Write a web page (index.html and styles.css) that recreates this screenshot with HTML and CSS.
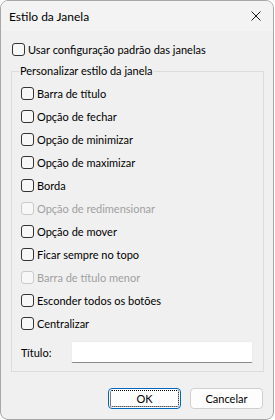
FILE: index.html
```html
<!DOCTYPE html>
<html lang="pt">
    <head>
        <meta charset="UTF-8" />
        <title>Estilo da Janela</title>
        <link rel="stylesheet" href="styles.css">
    </head>
    <body>
        <div class="window">
            <div class="titlebar">
                <span class="title">Estilo da Janela</span>
                <span class="close">
                    <svg width="10" height="10" viewBox="0 0 10 10">
                        <path d="M0.5 0.5 L9.5 9.5 M9.5 0.5 L0.5 9.5" stroke="#1a1a1a" stroke-width="1" fill="none" />
                    </svg>
                </span>
            </div>
            <div class="content">
                <label class="check top"><span class="box"></span>Usar configuração padrão das janelas</label>
                <fieldset class="group">
                    <legend>Personalizar estilo da janela</legend>
                    <label class="check"><span class="box"></span>Barra de título</label>
                    <label class="check"><span class="box"></span>Opção de fechar</label>
                    <label class="check"><span class="box"></span>Opção de minimizar</label>
                    <label class="check"><span class="box"></span>Opção de maximizar</label>
                    <label class="check"><span class="box"></span>Borda</label>
                    <label class="check disabled"><span class="box"></span>Opção de redimensionar</label>
                    <label class="check"><span class="box"></span>Opção de mover</label>
                    <label class="check"><span class="box"></span>Ficar sempre no topo</label>
                    <label class="check disabled"><span class="box"></span>Barra de título menor</label>
                    <label class="check"><span class="box"></span>Esconder todos os botões</label>
                    <label class="check"><span class="box"></span>Centralizar</label>
                    <div class="field">
                        <span class="field-label">Título:</span>
                        <input type="text" class="field-input" />
                    </div>
                </fieldset>
                <div class="buttons">
                    <button type="button" class="btn default"><span class="focus">OK</span></button>
                    <button type="button" class="btn">Cancelar</button>
                </div>
            </div>
        </div>
    </body>
</html>
```

FILE: styles.css
```css
* {
    margin: 0;
    padding: 0;
    box-sizing: border-box;
}
body {
    width: 275px;
    height: 420px;
    background-color: #ffffff;
    font-family: Lato, "Noto Sans", sans-serif;
    font-size: 11px;
    color: #000;
}
.window {
    width: 274px;
    height: 420px;
    border: 1px solid #a8a8a8;
    border-radius: 8px;
    background-color: #f0f0f0;
    overflow: hidden;
}
.titlebar {
    height: 30px;
    background-color: #f3f3f3;
    display: flex;
    align-items: center;
    justify-content: space-between;
    padding: 0 8px;
    font-size: 12px;
}
.titlebar .close {
    display: flex;
    margin-right: 4px;
}
.content {
    padding: 7px 9px 0 10px;
}
.check {
    display: flex;
    align-items: center;
    height: 23px;
    white-space: nowrap;
}
.check .box {
    width: 13px;
    height: 13px;
    border: 1px solid #333;
    border-radius: 3px;
    background-color: #f7f7f7;
    margin-right: 3px;
    flex: none;
}
.check.top {
    margin-left: 1px;
}
.check.disabled {
    color: #a0a0a0;
}
.check.disabled .box {
    border-color: #cacaca;
}
.group {
    margin-top: 2px;
    border: 1px solid #dcdcdc;
    padding: 3px 9px 8px 9px;
}
.group legend {
    line-height: 16px;
    margin-left: -2px;
    padding: 0 1px;
}
.field {
    display: flex;
    align-items: center;
    margin-top: 6px;
}
.field-label {
    width: 50px;
}
.field-input {
    width: 182px;
    height: 22px;
    background-color: #fff;
    border: 1px solid #ececec;
    border-bottom-color: #8a8a8a;
    border-radius: 2px;
    outline: none;
}
.buttons {
    display: flex;
    justify-content: flex-end;
    gap: 9px;
    margin-top: 16px;
    padding-right: 1px;
}
.btn {
    width: 73px;
    height: 21px;
    font-family: inherit;
    font-size: 11px;
    background-color: #fdfdfd;
    border: 1px solid #d0d0d0;
    border-radius: 4px;
    color: #000;
}
.btn.default {
    border: 1px solid #0067c0;
    padding: 1px;
}
.btn.default .focus {
    display: flex;
    align-items: center;
    justify-content: center;
    height: 100%;
    border: 1px dotted #000;
    border-radius: 2px;
}
```
